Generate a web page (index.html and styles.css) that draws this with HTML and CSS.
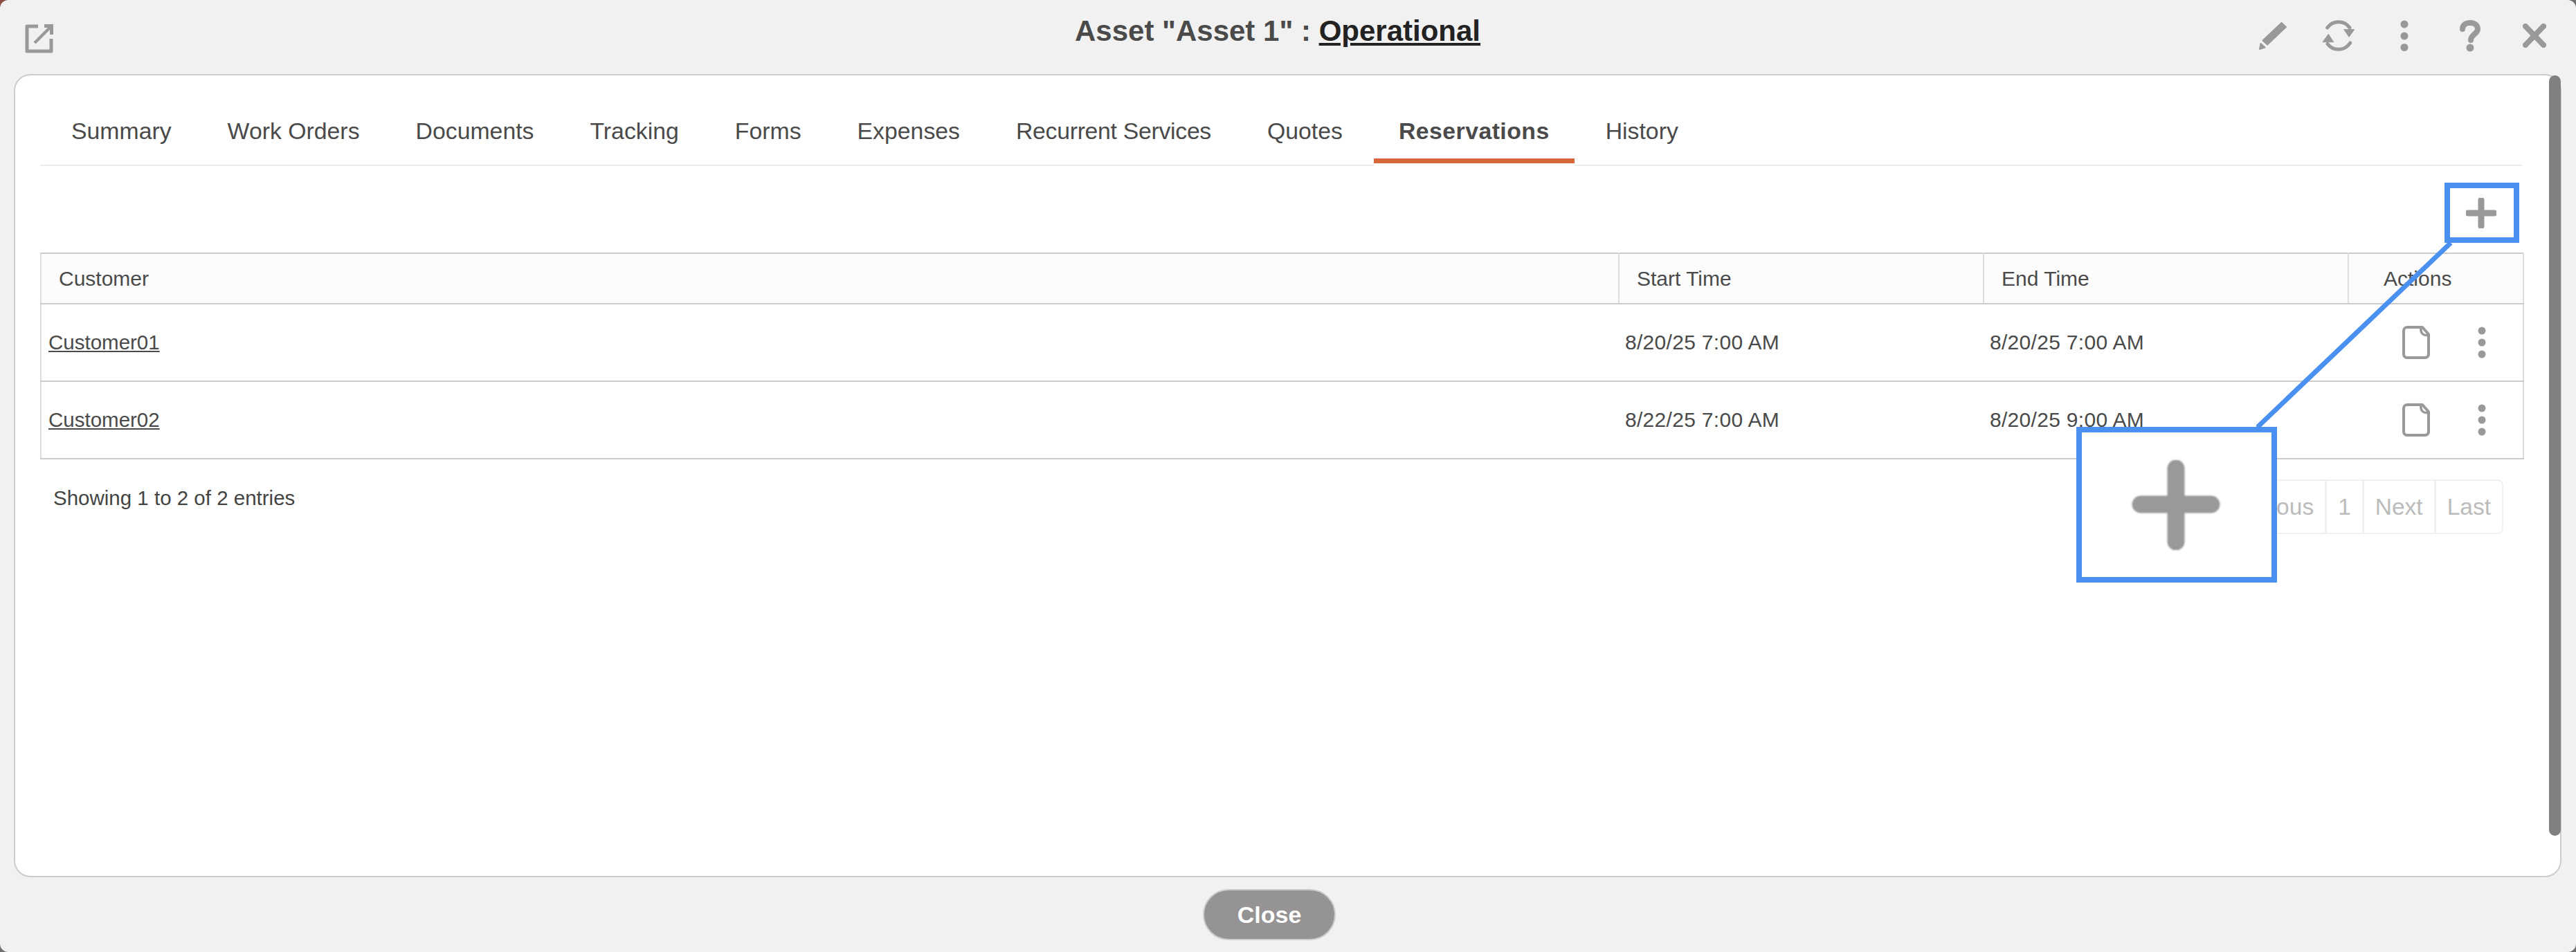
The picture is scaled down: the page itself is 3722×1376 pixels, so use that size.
FILE: index.html
```html
<!DOCTYPE html>
<html lang="en">
<head>
<meta charset="utf-8">
<title>Asset 1</title>
<link rel="stylesheet" href="styles.css">
</head>
<body>
<div class="modal">
  <header class="modal-head">
    <svg class="icon-ext" viewBox="0 0 41 42" aria-hidden="true"><path d="M19 3H3v36h35V21" fill="none" stroke="#999" stroke-width="5" stroke-linejoin="round"/><path d="M14 27 37 4" fill="none" stroke="#999" stroke-width="4.500"/><path d="M28 2.500h10.500V15" fill="none" stroke="#999" stroke-width="5"/></svg>
    <h1 class="title">Asset "Asset 1" : <a class="title-status">Operational</a></h1>
    <div class="head-tools">
      <svg class="tool-pencil" viewBox="0 0 42 41" aria-hidden="true"><path d="M33.500 1 40 7 13 32.500 6.500 26.500zM3.500 31l6 5.500L2 39z" fill="#999" stroke="#999" stroke-width="2" stroke-linejoin="round"/></svg>
      <svg class="tool-refresh" viewBox="0 0 47 46" aria-hidden="true"><path d="M7.700 11A20 20 0 0 1 40 11M40.700 33A20 20 0 0 1 8 34.400" fill="none" stroke="#999" stroke-width="5" stroke-linecap="round"/><path d="M31.700 13.700H46.700L39 24.300zM1 31.700H16.700L9.300 20.300z" fill="#999" stroke="#999" stroke-width="1" stroke-linejoin="round"/></svg>
      <svg class="tool-kebab" viewBox="0 0 12 46" aria-hidden="true"><circle cx="6" cy="6" r="5.500" fill="#999"/><circle cx="6" cy="23" r="5.500" fill="#999"/><circle cx="6" cy="39.500" r="5.500" fill="#999"/></svg>
      <svg class="tool-help" viewBox="0 0 30 46" aria-hidden="true"><path d="M4 13C4 7 9 4 15 4c6 0 11 3 11 9 0 7-10 8-10 16" fill="none" stroke="#999" stroke-width="8" stroke-linecap="round"/><circle cx="15" cy="40" r="5.500" fill="#999"/></svg>
      <svg class="tool-close" viewBox="0 0 34 35" aria-hidden="true"><path d="M4 4l26 27M30 4 4 31" fill="none" stroke="#999" stroke-width="8" stroke-linecap="round"/></svg>
    </div>
  </header>

  <main class="card">
    <nav class="tabs">
      <a class="tab">Summary</a>
      <a class="tab">Work Orders</a>
      <a class="tab">Documents</a>
      <a class="tab">Tracking</a>
      <a class="tab">Forms</a>
      <a class="tab">Expenses</a>
      <a class="tab tab-tight">Recurrent Services</a>
      <a class="tab">Quotes</a>
      <a class="tab tab-active">Reservations</a>
      <a class="tab">History</a>
    </nav>

    <div class="toolbar">
      <svg class="plus" viewBox="0 0 44 44" aria-hidden="true"><path d="M22 3v38M3 22h38" fill="none" stroke="#999" stroke-width="9" stroke-linecap="round"/></svg>
    </div>

    <table class="grid">
      <colgroup><col class="c-customer"><col class="c-time"><col class="c-time"><col class="c-actions"></colgroup>
      <thead>
        <tr><th>Customer</th><th>Start Time</th><th>End Time</th><th class="th-actions">Actions</th></tr>
      </thead>
      <tbody>
        <tr>
          <td><a class="link">Customer01</a></td><td class="date">8/20/25 7:00 AM</td><td class="date">8/20/25 7:00 AM</td>
          <td><div class="row-actions">
            <svg class="doc" viewBox="0 0 40 48" aria-hidden="true"><path d="M29 2H7a5 5 0 0 0-5 5v34a5 5 0 0 0 5 5h26a5 5 0 0 0 5-5V12z" fill="none" stroke="#999" stroke-width="4" stroke-linejoin="round"/><path d="M27 3c-1 7 3 12 11 10" fill="none" stroke="#999" stroke-width="3.500"/></svg>
            <svg class="kebab" viewBox="0 0 12 46" aria-hidden="true"><circle cx="6" cy="6" r="5.500" fill="#999"/><circle cx="6" cy="23" r="5.500" fill="#999"/><circle cx="6" cy="40" r="5.500" fill="#999"/></svg>
          </div></td>
        </tr>
        <tr>
          <td><a class="link">Customer02</a></td><td class="date">8/22/25 7:00 AM</td><td class="date">8/20/25 9:00 AM</td>
          <td><div class="row-actions">
            <svg class="doc" viewBox="0 0 40 48" aria-hidden="true"><path d="M29 2H7a5 5 0 0 0-5 5v34a5 5 0 0 0 5 5h26a5 5 0 0 0 5-5V12z" fill="none" stroke="#999" stroke-width="4" stroke-linejoin="round"/><path d="M27 3c-1 7 3 12 11 10" fill="none" stroke="#999" stroke-width="3.500"/></svg>
            <svg class="kebab" viewBox="0 0 12 46" aria-hidden="true"><circle cx="6" cy="6" r="5.500" fill="#999"/><circle cx="6" cy="23" r="5.500" fill="#999"/><circle cx="6" cy="40" r="5.500" fill="#999"/></svg>
          </div></td>
        </tr>
      </tbody>
    </table>

    <div class="table-foot">
      <div class="info">Showing 1 to 2 of 2 entries</div>
      <div class="pager">
        <span class="page">First</span><span class="page">Previous</span><span class="page">1</span><span class="page">Next</span><span class="page">Last</span>
      </div>
    </div>

    <div class="scrollbar"></div>
  </main>

  <footer class="modal-foot"><button class="close-btn">Close</button></footer>

  <svg class="callout-line" viewBox="0 0 300 280" aria-hidden="true"><path d="M281 4 0 272" fill="none" stroke="#4a90f0" stroke-width="7"/></svg>
  <div class="callout-small"></div>
  <div class="callout-big">
    <svg class="plus-big" viewBox="0 0 128 130" aria-hidden="true"><path d="M64 12v106M13 64h102" fill="none" stroke="#999" stroke-width="25" stroke-linecap="round"/></svg>
  </div>
</div>
</body>
</html>
```

FILE: styles.css
```css
* { box-sizing: border-box; }
html, body { margin: 0; height: 100%; }
body {
  background: linear-gradient(#8a4a40, #8a4a40) top left / 20px 20px no-repeat, #6f6f6f;
  font-family: "Liberation Sans", Arial, sans-serif;
  color: #4a4a4a;
  overflow: hidden;
}
.modal {
  position: relative;
  width: 3722px;
  height: 1376px;
  background: #f1f1f1;
  border-radius: 12px;
  display: flex;
  flex-direction: column;
  padding: 0 21px 0 20px;
}
.modal-head {
  height: 107px;
  flex: none;
  display: flex;
  align-items: flex-start;
}
.icon-ext { width: 41px; height: 42px; margin: 35px 0 0 16px; flex: none; }
.title {
  flex: 1;
  margin: 0;
  padding: 20px 0 0 352px;
  text-align: center;
  font-size: 42px;
  line-height: 50px;
  font-weight: 700;
  color: #4a4a4a;
}
.title-status { color: #222; text-decoration: underline; }
.head-tools { display: flex; align-items: flex-start; margin-right: 22px; flex: none; }
.tool-pencil { width: 42px; height: 41px; margin-top: 32px; }
.tool-refresh { width: 47px; height: 46px; margin: 29px 0 0 50px; }
.tool-kebab { width: 12px; height: 46px; margin: 29px 0 0 66px; }
.tool-help { width: 30px; height: 46px; margin: 29px 0 0 74px; }
.tool-close { width: 34px; height: 35px; margin: 34px 0 0 61px; }

.card {
  position: relative;
  height: 1161px;
  flex: none;
  background: #fff;
  border: 2px solid #ccc;
  border-radius: 24px;
  padding: 0 55px 0 36px;
}
.tabs {
  display: flex;
  height: 131px;
  border-bottom: 2px solid #ececec;
  padding-left: 9px;
  align-items: flex-end;
}
.tab {
  display: block;
  padding: 22px 36px 0;
  margin-right: 9px;
  font-size: 33.800px;
  line-height: 40px;
  height: 93px;
  margin-bottom: -2px;
  color: #4a4a4a;
  position: relative;
}
.tab-tight { letter-spacing: -0.3px; }
.tab-active { font-weight: 700; letter-spacing: 0.45px; border-bottom: 2px solid #fff; }
.tab-active::after {
  content: "";
  position: absolute;
  left: 0;
  right: 0;
  bottom: 2px;
  height: 7px;
  background: #d9663a;
}
.toolbar { height: 125px; display: flex; justify-content: flex-end; padding: 46px 37px 0 0; }
.plus { width: 44px; height: 44px; display: block; }

.grid {
  width: 3587px;
  table-layout: fixed;
  border-collapse: collapse;
  font-size: 30px;
  color: #4a4a4a;
}
.c-customer { width: 2280px; }
.c-time { width: 527px; }
.c-actions { width: 253px; }
.grid th {
  height: 73px;
  background: #fcfcfc;
  font-weight: 400;
  text-align: left;
  padding: 0 0 0 25px;
  border: 2px solid #ddd;
  border-top-color: #ccc;
  border-bottom-color: #ccc;
}
.grid .th-actions { padding-left: 50px; }
.grid td {
  height: 112px;
  padding: 0 0 0 10px;
  font-size: 29.500px;
  border: 2px solid #ddd;
  border-top-color: #ccc;
  border-bottom-color: #ccc;
  border-left: 0;
  border-right: 0;
}
.grid td:first-child { border-left: 2px solid #ddd; }
.grid td:last-child { border-right: 2px solid #ddd; padding: 0; }
.grid .date { padding-left: 9px; font-size: 30px; letter-spacing: 0.3px; }
.link { text-decoration: underline; }
.row-actions { display: flex; align-items: center; padding-left: 78px; }
.doc { width: 40px; height: 48px; flex: none; }
.kebab { width: 12px; height: 46px; margin-left: 69px; flex: none; }

.table-foot { display: flex; justify-content: space-between; align-items: flex-start; width: 3589px; }
.info { font-size: 29.500px; line-height: 36px; padding: 38px 0 0 19px; color: #444; }
.pager { display: flex; margin: 29px 30px 0 0; font-size: 33.500px; color: #bbb; }
.page {
  display: block;
  height: 79px;
  line-height: 75px;
  padding: 0 16px;
  border: 2px solid #f0f0f0;
  margin-left: -1px;
}
.page:last-child { border-radius: 0 8px 8px 0; }

.scrollbar {
  position: absolute;
  top: 0;
  right: -1px;
  width: 17px;
  height: 1099px;
  background: #808080;
  border-radius: 9px;
}

.modal-foot { display: flex; justify-content: center; padding: 17px 53px 0 0; }
.close-btn {
  width: 192px;
  height: 74px;
  border-radius: 37px;
  border: 2px solid #ccc;
  background: #959393;
  color: #fff;
  font: 700 34px "Liberation Sans", Arial, sans-serif;
  padding: 0;
}

.callout-line { position: absolute; left: 3260px; top: 347px; width: 300px; height: 280px; }
.callout-small {
  position: absolute;
  left: 3532px;
  top: 264px;
  width: 108px;
  height: 87px;
  border: 8px solid #4a90f0;
}
.callout-big {
  position: absolute;
  left: 3000px;
  top: 617px;
  width: 290px;
  height: 225px;
  background: #fff;
  border: 8px solid #4a90f0;
  display: flex;
  align-items: center;
  justify-content: center;
}
.plus-big { width: 128px; height: 130px; filter: blur(1px); margin: 0 0 0 -2px; }
```
